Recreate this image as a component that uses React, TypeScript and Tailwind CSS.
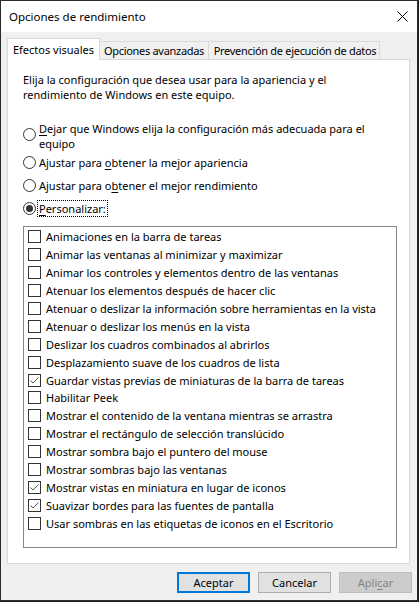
import React from "react";

const items: [string, boolean][] = [
  ["Animaciones en la barra de tareas", false],
  ["Animar las ventanas al minimizar y maximizar", false],
  ["Animar los controles y elementos dentro de las ventanas", false],
  ["Atenuar los elementos después de hacer clic", false],
  ["Atenuar o deslizar la información sobre herramientas en la vista", false],
  ["Atenuar o deslizar los menús en la vista", false],
  ["Deslizar los cuadros combinados al abrirlos", false],
  ["Desplazamiento suave de los cuadros de lista", false],
  ["Guardar vistas previas de miniaturas de la barra de tareas", true],
  ["Habilitar Peek", false],
  ["Mostrar el contenido de la ventana mientras se arrastra", false],
  ["Mostrar el rectángulo de selección translúcido", false],
  ["Mostrar sombra bajo el puntero del mouse", false],
  ["Mostrar sombras bajo las ventanas", false],
  ["Mostrar vistas en miniatura en lugar de iconos", true],
  ["Suavizar bordes para las fuentes de pantalla", true],
  ["Usar sombras en las etiquetas de iconos en el Escritorio", false],
];

function Radio({ checked }: { checked?: boolean }) {
  return (
    <div className="w-[13px] h-[13px] shrink-0 rounded-full border border-[#333333] bg-white flex items-center justify-center">
      {checked && <div className="w-[7px] h-[7px] rounded-full bg-[#333333]" />}
    </div>
  );
}

function Check({ checked }: { checked: boolean }) {
  return (
    <div className="w-[13px] h-[13px] shrink-0 border border-[#333333] bg-white flex items-center justify-center">
      {checked && (
        <svg width="11" height="11" viewBox="0 0 11 11">
          <path d="M1.5 5.5 L4 8 L9.5 2.5" fill="none" stroke="#555555" strokeWidth="1" />
        </svg>
      )}
    </div>
  );
}

export default function App() {
  return (
    <div className="w-[419px] h-[602px] overflow-hidden bg-[#1f1f1f] font-['Noto_Sans','Open_Sans',sans-serif] text-[11px] leading-[15px] text-black">
      <div className="w-[418px] h-[601px] border border-[#2b2b2b] flex flex-col overflow-hidden">
        <div className="h-[31px] shrink-0 bg-white flex items-center justify-between pl-[8px] pr-[9px]">
          <span className="text-[11.5px]">Opciones de rendimiento</span>
          <svg width="11" height="11" viewBox="0 0 11 11">
            <path d="M0.5 0.5 L10.5 10.5 M10.5 0.5 L0.5 10.5" stroke="#000" strokeWidth="1" />
          </svg>
        </div>
        <div className="flex-1 bg-[#f0f0f0] flex flex-col pl-[6px] pt-[6px]">
          <div className="flex items-end h-[21px] whitespace-nowrap">
            <div className="relative z-10 w-[93px] h-[22px] -mb-px pb-px bg-white border-l border-t border-r border-[#d9d9d9] flex items-center justify-center">
              Efectos visuales
            </div>
            <div className="w-[109px] h-[18px] bg-[#f0f0f0] border-t border-r border-[#d9d9d9] flex items-center justify-center tracking-[-0.3px]">
              Opciones avanzadas
            </div>
            <div className="w-[171px] h-[18px] bg-[#f0f0f0] border-t border-r border-[#d9d9d9] flex items-center justify-center pl-[2px] tracking-[-0.3px]">
              Prevención de ejecución de datos
            </div>
          </div>
          <div className="w-[403px] h-[505px] shrink-0 bg-white border border-[#d9d9d9] px-[15px] pt-[12px]">
            <div className="h-[30px] whitespace-nowrap">
              Elija la configuración que desea usar para la apariencia y el
              <br />
              rendimiento de Windows en este equipo.
            </div>
            <div className="mt-[19px] h-[30px] flex items-start whitespace-nowrap">
              <div className="mt-[7px]">
                <Radio />
              </div>
              <div className="ml-[3px]">
                <u className="underline-offset-2">D</u>ejar que Windows elija la configuración más adecuada para el
                <br />
                equipo
              </div>
            </div>
            <div className="flex items-center h-[23px]">
              <Radio />
              <span className="ml-[3px]">
                Ajustar para <u className="underline-offset-2">o</u>btener la mejor apariencia
              </span>
            </div>
            <div className="flex items-center h-[23px]">
              <Radio />
              <span className="ml-[3px]">
                Ajustar para o<u className="underline-offset-2">b</u>tener el mejor rendimiento
              </span>
            </div>
            <div className="flex items-center h-[23px]">
              <Radio checked />
              <span className="ml-px h-[17px] px-px border border-dotted border-black flex items-center">
                <span>
                  <u className="underline-offset-2">P</u>ersonalizar:
                </span>
              </span>
            </div>
            <div className="mt-[6px] w-[374px] h-[322px] border border-[#828790] pt-px">
              {items.map(([label, checked]) => (
                <div key={label} className="h-[17.9px] flex items-center pl-[4px] whitespace-nowrap">
                  <Check checked={checked} />
                  <span className="ml-[5px]">{label}</span>
                </div>
              ))}
            </div>
          </div>
          <div className="mt-[8px] flex justify-end gap-[8px] pr-[5px]">
            <div className="w-[73px] h-[21px] bg-[#e1e1e1] border-2 border-[#0078d7] flex items-center justify-center">
              Aceptar
            </div>
            <div className="w-[73px] h-[21px] bg-[#e1e1e1] border border-[#adadad] flex items-center justify-center">
              Cancelar
            </div>
            <div className="w-[73px] h-[21px] bg-[#cccccc] border border-[#bfbfbf] text-[#838383] flex items-center justify-center">
              <span>
                Apli<u className="underline-offset-2">c</u>ar
              </span>
            </div>
          </div>
        </div>
      </div>
    </div>
  );
}
